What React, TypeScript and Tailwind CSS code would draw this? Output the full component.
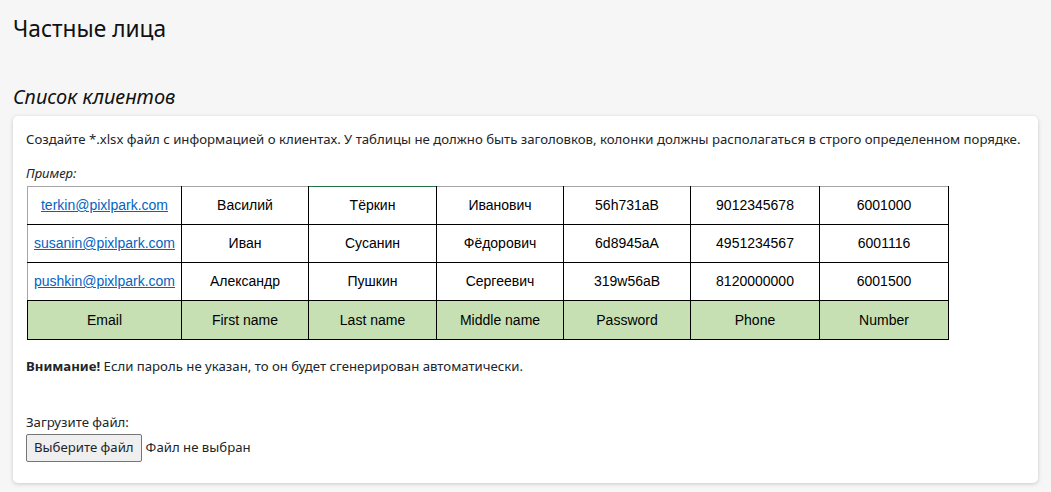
import React from 'react';

const rows = [
	['terkin@pixlpark.com', 'Василий', 'Тёркин', 'Иванович', '56h731aB', '9012345678', '6001000'],
	['susanin@pixlpark.com', 'Иван', 'Сусанин', 'Фёдорович', '6d8945aA', '4951234567', '6001116'],
	['pushkin@pixlpark.com', 'Александр', 'Пушкин', 'Сергеевич', '319w56aB', '8120000000', '6001500'],
];

const head = ['Email', 'First name', 'Last name', 'Middle name', 'Password', 'Phone', 'Number'];

const widths = ['w-[154px]', 'w-[127px]', 'w-[128px]', 'w-[127px]', 'w-[127px]', 'w-[129px]', 'w-[129px]'];

export default function App() {
	return (
		<div className="min-h-[492px] bg-[#f6f6f6] px-[13px] pt-[14px] pb-[9px] font-['Noto_Sans',sans-serif] text-[#212529]">
			<h1 className="text-[22.7px] leading-[30px] text-[#111]">Частные лица</h1>
			<h2 className="mt-[39px] text-[20px] leading-[28px] italic text-[#111]">Список клиентов</h2>

			<div className="mt-[5px] rounded-[5px] bg-white px-[13px] pt-[14px] pb-[21px] shadow-[0_1px_4px_rgba(0,0,0,0.18)]">
				<p className="text-[13.2px] leading-[18px]">
					Создайте *.xlsx файл с информацией о клиентах. У таблицы не должно быть заголовков, колонки должны располагаться в строго определенном порядке.
				</p>
				<p className="mt-[17px] text-[13px] leading-[16px] italic">Пример:</p>

				<table className="mt-[5px] ml-px border-collapse font-['Liberation_Sans',sans-serif] text-[14px] text-black">
					<tbody>
						{rows.map((r, i) => (
							<tr key={i} className="h-[38px]">
								{r.map((c, j) => (
									<td
										key={j}
										className={`${widths[j]} border border-black text-center ${i === 0 ? (j === 2 ? 'border-t-[#217346]' : 'border-t-[#a6a6a6]') : ''} ${j === 0 ? 'border-l-[#a6a6a6]' : ''}`}
									>
										{j === 0 ? <span className="text-[#0563c1] underline">{c}</span> : c}
									</td>
								))}
							</tr>
						))}
						<tr className="h-[39px] bg-[#c6e0b4]">
							{head.map((h, j) => (
								<td key={j} className={`${widths[j]} border border-black text-center`}>
									{h}
								</td>
							))}
						</tr>
					</tbody>
				</table>

				<p className="mt-[17px] text-[13.2px] leading-[18px]">
					<b>Внимание!</b> Если пароль не указан, то он будет сгенерирован автоматически.
				</p>

				<p className="mt-[38px] text-[13.2px] leading-[18px]">Загрузите файл:</p>
				<div className="mt-[3px] flex items-center gap-[4px] text-[13.2px]">
					<button className="h-[28px] rounded-[2px] border border-[#767676] bg-[#efefef] px-[7px] leading-none">
						Выберите файл
					</button>
					<span>Файл не выбран</span>
				</div>
			</div>
		</div>
	);
}
